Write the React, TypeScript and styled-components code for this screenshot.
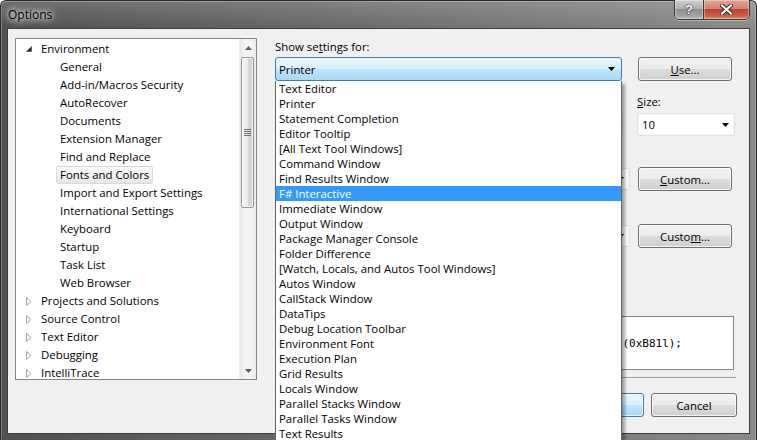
import styled, { createGlobalStyle } from "styled-components";

const UI = `"Open Sans", "Liberation Sans", Arial, sans-serif`;
const MONO = `"DejaVu Sans Mono", "Liberation Mono", monospace`;

const GlobalStyle = createGlobalStyle`
  html, body { margin: 0; padding: 0; overflow: hidden; }
  body { font-family: ${UI}; font-size: 11.4px; color: #000; background: #fff; }
  * { box-sizing: border-box; }
`;

type TreeItem = { label: string; level: number; toggle?: "open" | "closed"; selected?: boolean };

const treeItems: TreeItem[] = [
  { label: "Environment", level: 0, toggle: "open" },
  { label: "General", level: 1 },
  { label: "Add-in/Macros Security", level: 1 },
  { label: "AutoRecover", level: 1 },
  { label: "Documents", level: 1 },
  { label: "Extension Manager", level: 1 },
  { label: "Find and Replace", level: 1 },
  { label: "Fonts and Colors", level: 1, selected: true },
  { label: "Import and Export Settings", level: 1 },
  { label: "International Settings", level: 1 },
  { label: "Keyboard", level: 1 },
  { label: "Startup", level: 1 },
  { label: "Task List", level: 1 },
  { label: "Web Browser", level: 1 },
  { label: "Projects and Solutions", level: 0, toggle: "closed" },
  { label: "Source Control", level: 0, toggle: "closed" },
  { label: "Text Editor", level: 0, toggle: "closed" },
  { label: "Debugging", level: 0, toggle: "closed" },
  { label: "IntelliTrace", level: 0, toggle: "closed" },
];

const settingsFor = [
  "Text Editor",
  "Printer",
  "Statement Completion",
  "Editor Tooltip",
  "[All Text Tool Windows]",
  "Command Window",
  "Find Results Window",
  "F# Interactive",
  "Immediate Window",
  "Output Window",
  "Package Manager Console",
  "Folder Difference",
  "[Watch, Locals, and Autos Tool Windows]",
  "Autos Window",
  "CallStack Window",
  "DataTips",
  "Debug Location Toolbar",
  "Environment Font",
  "Execution Plan",
  "Grid Results",
  "Locals Window",
  "Parallel Stacks Window",
  "Parallel Tasks Window",
  "Text Results",
];

// window chrome

const Window = styled.div`
  width: 757px;
  height: 440px;
  display: flex;
  flex-direction: column;
  border: 1px solid #2b2b2b;
  border-bottom: none;
  border-radius: 6px 6px 0 0;
  background:
    linear-gradient(180deg, rgba(255, 255, 255, 0.16) 0px, rgba(255, 255, 255, 0) 26px),
    linear-gradient(90deg, #505050 0%, #676767 40%, #8a8a8a 100%);
  box-shadow: inset 1px 1px 0 rgba(255, 255, 255, 0.25), inset -1px 0 0 rgba(255, 255, 255, 0.2);
`;

const TitleBar = styled.div`
  height: 27px;
  flex-shrink: 0;
  display: flex;
  align-items: flex-start;
  padding: 0 6px 0 7px;
`;

const Title = styled.span`
  margin-top: 6px;
  line-height: 16px;
  font-size: 12px;
  color: #000;
  text-shadow: 0 0 5px #fff, 0 0 9px rgba(255, 255, 255, 0.9), 0 0 14px rgba(255, 255, 255, 0.6);
`;

const CaptionButtons = styled.div`
  margin-left: auto;
  margin-top: -1px;
  height: 20px;
  display: flex;
  border: 1px solid #3a3a3a;
  border-top: none;
  border-radius: 0 0 5px 5px;
  overflow: hidden;
  box-shadow: 0 1px 0 rgba(255, 255, 255, 0.35);
`;

const CaptionButton = styled.div<{ $close?: boolean }>`
  width: ${(p) => (p.$close ? 46 : 28)}px;
  display: flex;
  align-items: center;
  justify-content: center;
  color: #fff;
  font-family: "Liberation Sans", Arial, sans-serif;
  font-weight: bold;
  font-size: 13px;
  text-shadow: 0 0 2px #222, 0 0 1px #000;
  background: ${(p) =>
    p.$close
      ? "linear-gradient(180deg, #e2a597 0%, #d38372 45%, #c1412d 50%, #c85a44 80%, #d98a70 100%)"
      : "linear-gradient(180deg, #cfcfcf 0%, #b3b3b3 45%, #909090 50%, #a0a0a0 80%, #b8b8b8 100%)"};
  box-shadow: inset 0 0 0 1px rgba(255, 255, 255, 0.35);
  & + & {
    border-left: 1px solid #3a3a3a;
  }
`;

const Client = styled.div`
  flex: 1;
  position: relative;
  margin: 0 6px 6px 6px;
  border: 1px solid #3e3e3e;
  background: #f0f0f0;
  display: flex;
  align-items: flex-start;
  padding: 9px 0 0 7px;
`;

// tree view

const Tree = styled.div`
  width: 242px;
  height: 342px;
  flex-shrink: 0;
  display: flex;
  border: 1px solid #828790;
  background: #fff;
`;

const TreeBody = styled.div`
  flex: 1;
  overflow: hidden;
  padding-top: 1px;
`;

const TreeRow = styled.div<{ $level: number }>`
  height: 18px;
  display: flex;
  align-items: center;
  padding-left: ${(p) => 5 + p.$level * 19}px;
  white-space: nowrap;
`;

const Toggle = styled.span`
  width: 16px;
  height: 18px;
  flex-shrink: 0;
  display: flex;
  align-items: center;
  justify-content: center;
`;

const TreeLabel = styled.span<{ $selected?: boolean }>`
  line-height: 16px;
  padding: 0 3px;
  border: 1px solid ${(p) => (p.$selected ? "#d9d9d9" : "transparent")};
  border-radius: 2px;
  background: ${(p) => (p.$selected ? "linear-gradient(180deg, #fafafa, #e6e6e6)" : "transparent")};
`;

const ScrollBar = styled.div`
  width: 17px;
  flex-shrink: 0;
  display: flex;
  flex-direction: column;
  background: linear-gradient(90deg, #e6e6e6 0%, #f4f4f4 30%, #f4f4f4 70%, #eaeaea 100%);
  border-left: 1px solid #eeeeee;
`;

const ScrollArrow = styled.div`
  height: 17px;
  display: flex;
  align-items: center;
  justify-content: center;
`;

const ScrollTrack = styled.div`
  flex: 1;
`;

const Thumb = styled.div<{ $size: number }>`
  height: ${(p) => p.$size}px;
  margin: 1px 2px 0 1px;
  border: 1px solid #979797;
  border-radius: 2px;
  background: linear-gradient(90deg, #f5f5f5 0%, #e9e9e9 50%, #d8d8d8 51%, #d2d2d2 100%);
  box-shadow: inset 0 0 0 1px rgba(255, 255, 255, 0.7);
  display: flex;
  align-items: center;
  justify-content: center;
`;

// right panel

const Panel = styled.div`
  width: 462px;
  margin-left: 18px;
  margin-top: 1px;
  display: flex;
  flex-direction: column;
`;

const FieldLabel = styled.div<{ $gap?: number; $after?: number }>`
  height: 16px;
  line-height: 16px;
  margin-top: ${(p) => p.$gap ?? 0}px;
  margin-bottom: ${(p) => p.$after ?? 3}px;
  white-space: nowrap;
`;

const TopRow = styled.div`
  display: flex;
  gap: 16px;
`;

const ComboAnchor = styled.div`
  position: relative;
  width: 347px;
`;

const ActiveCombo = styled.div`
  height: 24px;
  display: flex;
  align-items: center;
  padding: 0 6px 0 3px;
  border: 1px solid #3c7fb1;
  border-radius: 3px;
  background: linear-gradient(180deg, #eaf6fd 0%, #d9f0fc 50%, #bee6fd 51%, #a7d9f5 100%);
`;

const Combo = styled.div<{ $h?: number; $grow?: boolean }>`
  height: ${(p) => p.$h ?? 23}px;
  flex: ${(p) => (p.$grow ? 1 : "none")};
  display: flex;
  align-items: center;
  padding: 0 5px 0 4px;
  border: 1px solid #e0e0e0;
  border-radius: 2px;
  background: #fff;
  box-shadow: inset 0 0 0 1px #f6f6f6;
`;

const ComboText = styled.span`
  flex: 1;
  white-space: nowrap;
  overflow: hidden;
`;

const DropList = styled.div`
  position: absolute;
  top: 100%;
  left: 0;
  width: 347px;
  z-index: 10;
  background: #fff;
  border: 1px solid #646464;
  border-top: none;
  box-shadow: 3px 3px 3px rgba(0, 0, 0, 0.35);
`;

const DropItem = styled.div<{ $active?: boolean }>`
  height: 15px;
  line-height: 15px;
  padding-left: 3px;
  white-space: nowrap;
  color: ${(p) => (p.$active ? "#fff" : "#000")};
  background: ${(p) => (p.$active ? "#3399ff" : "transparent")};
`;

const PushButton = styled.div<{ $w: number; $default?: boolean }>`
  width: ${(p) => p.$w}px;
  height: 24px;
  flex-shrink: 0;
  display: flex;
  align-items: center;
  justify-content: center;
  border: 1px solid ${(p) => (p.$default ? "#3c7fb1" : "#707070")};
  border-radius: 3px;
  background: ${(p) =>
    p.$default
      ? "linear-gradient(180deg, #eaf6fd 0%, #d9f0fc 50%, #bee6fd 51%, #a7d9f5 100%)"
      : "linear-gradient(180deg, #f2f2f2 0%, #ebebeb 50%, #dddddd 51%, #cfcfcf 100%)"};
  box-shadow: inset 0 0 0 1px rgba(255, 255, 255, 0.75);
`;

const FontRow = styled.div`
  display: grid;
  grid-template-columns: 348px 98px;
  column-gap: 14px;
  margin-top: 13px;
`;

const ItemsArea = styled.div`
  display: flex;
  gap: 8px;
`;

const ItemsColumn = styled.div<{ $w: number }>`
  width: ${(p) => p.$w}px;
  display: flex;
  flex-direction: column;
`;

const ListBox = styled.div`
  height: 100px;
  border: 1px solid #828790;
  background: #fff;
`;

const ColorRow = styled.div`
  display: flex;
  align-items: center;
  gap: 8px;
  height: 24px;
`;

const CheckRow = styled.div`
  margin-top: 8px;
  height: 16px;
  display: flex;
  align-items: center;
`;

const CheckBox = styled.span`
  width: 13px;
  height: 13px;
  border: 1px solid #8e8f8f;
  background: linear-gradient(135deg, #dcdcdc, #fbfbfb);
`;

const SampleBox = styled.div`
  height: 54px;
  margin-right: 3px;
  border: 1px solid #828790;
  background: #fff;
  display: flex;
  align-items: center;
  justify-content: flex-end;
  padding-right: 51px;
  font-family: ${MONO};
  font-size: 11px;
  white-space: nowrap;
  overflow: hidden;
`;

const Separator = styled.div`
  margin: 7px 1px 0 0;
  border-top: 1px solid #a0a0a0;
`;

const Footer = styled.div`
  margin-top: 15px;
  display: flex;
  justify-content: flex-end;
  gap: 7px;
`;

function ComboArrow() {
  return (
    <svg width="7" height="4" viewBox="0 0 7 4">
      <polygon points="0,0 7,0 3.5,4" fill="#000" />
    </svg>
  );
}

function TreeToggle({ state }: { state?: "open" | "closed" }) {
  if (state === "open") {
    return (
      <svg width="6" height="6" viewBox="0 0 6 6">
        <polygon points="5.5,0.5 5.5,5.5 0.5,5.5" fill="#262626" stroke="#595959" strokeWidth="0.8" />
      </svg>
    );
  }
  if (state === "closed") {
    return (
      <svg width="6" height="9" viewBox="0 0 6 9">
        <polygon points="0.5,0.5 5,4.5 0.5,8.5" fill="#fff" stroke="#a6a6a6" strokeWidth="1" />
      </svg>
    );
  }
  return null;
}

function ScrollGlyph({ up }: { up?: boolean }) {
  return (
    <svg width="7" height="4" viewBox="0 0 7 4">
      <polygon points={up ? "0,4 7,4 3.5,0" : "0,0 7,0 3.5,4"} fill="#5e5e5e" />
    </svg>
  );
}

function Grip() {
  return (
    <svg width="7" height="8" viewBox="0 0 7 8">
      {[0, 2, 4, 6].map((y) => (
        <rect key={y} x="0" y={y} width="7" height="1" fill="#6e6e6e" />
      ))}
    </svg>
  );
}

function CloseGlyph() {
  return (
    <svg width="13" height="11" viewBox="0 0 13 11">
      <path d="M2 1.5 L11 9.5 M11 1.5 L2 9.5" stroke="#3a2420" strokeWidth="4" strokeLinecap="square" />
      <path d="M2 1.5 L11 9.5 M11 1.5 L2 9.5" stroke="#fff" strokeWidth="2.2" strokeLinecap="square" />
    </svg>
  );
}

export default function App() {
  return (
    <>
      <GlobalStyle />
      <Window>
        <TitleBar>
          <Title>Options</Title>
          <CaptionButtons>
            <CaptionButton>?</CaptionButton>
            <CaptionButton $close>
              <CloseGlyph />
            </CaptionButton>
          </CaptionButtons>
        </TitleBar>

        <Client>
          <Tree>
            <TreeBody>
              {treeItems.map((item) => (
                <TreeRow key={item.label} $level={item.level}>
                  <Toggle>
                    <TreeToggle state={item.toggle} />
                  </Toggle>
                  <TreeLabel $selected={item.selected}>{item.label}</TreeLabel>
                </TreeRow>
              ))}
            </TreeBody>
            <ScrollBar>
              <ScrollArrow>
                <ScrollGlyph up />
              </ScrollArrow>
              <ScrollTrack>
                <Thumb $size={151}>
                  <Grip />
                </Thumb>
              </ScrollTrack>
              <ScrollArrow>
                <ScrollGlyph />
              </ScrollArrow>
            </ScrollBar>
          </Tree>

          <Panel>
            <FieldLabel $after={2}>
              Show se<u>t</u>tings for:
            </FieldLabel>
            <TopRow>
              <ComboAnchor>
                <ActiveCombo>
                  <ComboText>Printer</ComboText>
                  <ComboArrow />
                </ActiveCombo>
                <DropList>
                  {settingsFor.map((name) => (
                    <DropItem key={name} $active={name === "F# Interactive"}>
                      {name}
                    </DropItem>
                  ))}
                </DropList>
              </ComboAnchor>
              <PushButton $w={94}>
                <span>
                  <u>U</u>se...
                </span>
              </PushButton>
            </TopRow>

            {/* the left part of the rows below lies under the open drop-down list */}
            <FontRow>
              <div>
                <FieldLabel />
                <Combo>
                  <ComboText />
                  <ComboArrow />
                </Combo>
              </div>
              <div>
                <FieldLabel>
                  <u>S</u>ize:
                </FieldLabel>
                <Combo>
                  <ComboText>10</ComboText>
                  <ComboArrow />
                </Combo>
              </div>
            </FontRow>

            <ItemsArea>
              <ItemsColumn $w={166}>
                <FieldLabel $gap={12} />
                <ListBox />
              </ItemsColumn>
              <ItemsColumn $w={283}>
                <FieldLabel $gap={12} />
                <ColorRow>
                  <Combo $h={22} $grow>
                    <ComboText />
                    <ComboArrow />
                  </Combo>
                  <PushButton $w={94}>
                    <span>
                      <u>C</u>ustom...
                    </span>
                  </PushButton>
                </ColorRow>
                <FieldLabel $gap={14} />
                <ColorRow>
                  <Combo $h={22} $grow>
                    <ComboText />
                    <ComboArrow />
                  </Combo>
                  <PushButton $w={94}>
                    <span>
                      Custo<u>m</u>...
                    </span>
                  </PushButton>
                </ColorRow>
                <CheckRow>
                  <CheckBox />
                </CheckRow>
              </ItemsColumn>
            </ItemsArea>

            <FieldLabel $gap={25} />
            <SampleBox>(0xB81l);</SampleBox>
            <Separator />
            <Footer>
              <PushButton $w={86} $default />
              <PushButton $w={86}>Cancel</PushButton>
            </Footer>
          </Panel>
        </Client>
      </Window>
    </>
  );
}
